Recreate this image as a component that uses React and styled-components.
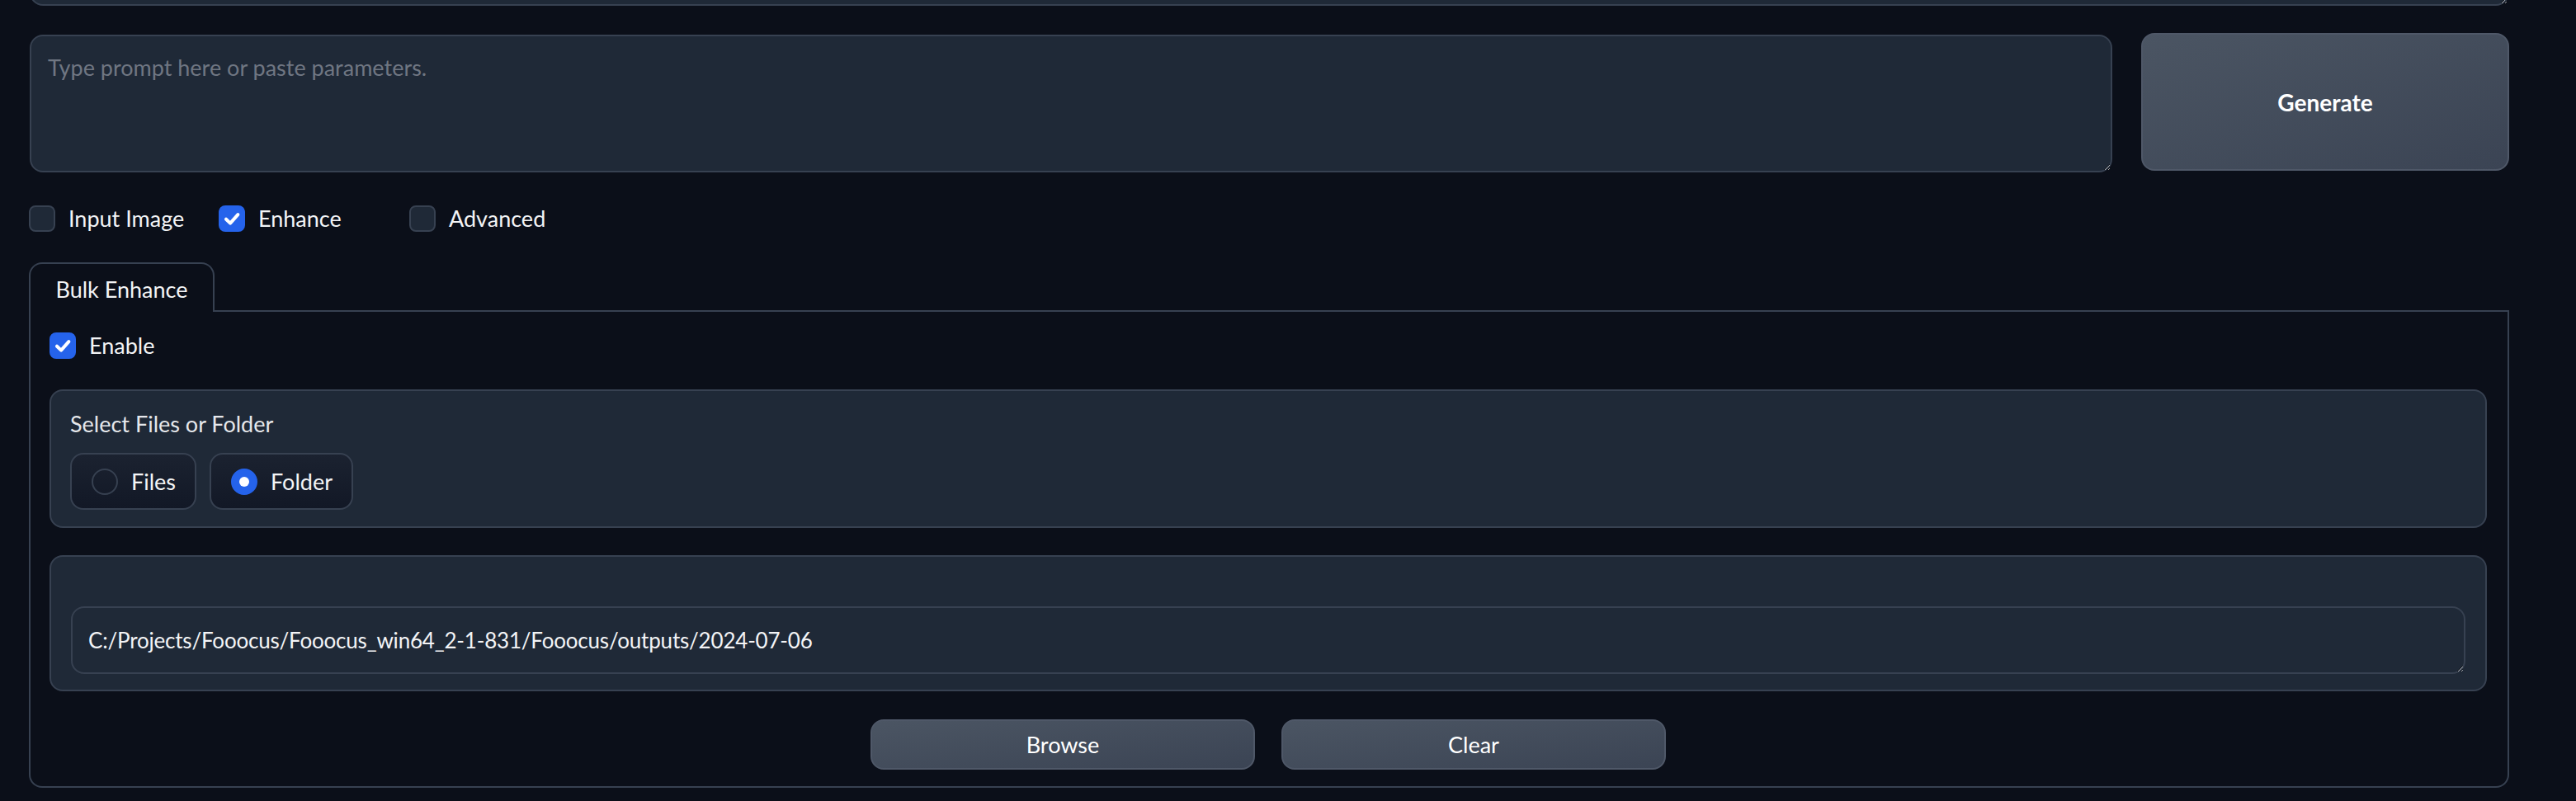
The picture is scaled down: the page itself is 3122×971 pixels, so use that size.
import React from 'react';
import styled, { createGlobalStyle } from 'styled-components';

const Global = createGlobalStyle`
  html, body { margin: 0; padding: 0; background: #0b0f19; }
  body {
    font-family: Lato, "Noto Sans", sans-serif;
    color: #f3f4f6;
    overflow: hidden;
  }
  * { box-sizing: border-box; }
`;

const FONT = 27;

const Page = styled.div`
  width: 3122px;
  height: 971px;
  padding: 0 81px 0 36px;
  display: flex;
  flex-direction: column;
  background: #0b0f19;
  overflow: hidden;
`;

const Area = styled.textarea`
  display: block;
  width: 100%;
  font-family: inherit;
  font-size: ${(p) => p.$size || FONT}px;
  letter-spacing: ${(p) => p.$ls || 0}px;
  line-height: 36px;
  color: #f3f4f6;
  background: #1f2937;
  border: 2px solid #374151;
  border-radius: 16px;
  padding: ${(p) => p.$pad || '20px'};
  color-scheme: dark;
  resize: vertical;
  outline: none;
  overflow: hidden;
  white-space: nowrap;
  &::placeholder { color: #6f7682; }
`;

const TopArea = styled(Area)`
  height: 100px;
  margin-top: -93px;
  flex: none;
`;

const PromptRow = styled.div`
  display: flex;
  gap: 35px;
  margin-top: 33px;
  height: 169px;
`;

const PromptArea = styled(Area)`
  flex: 1;
  height: 167px;
  margin-top: 2px;
`;

const SecondaryButton = styled.button`
  font-family: inherit;
  color: #ffffff;
  background: linear-gradient(to bottom right, #4b5563, #3b4454);
  border: 2px solid #4f5868;
  border-radius: 16px;
  cursor: pointer;
  display: flex;
  align-items: center;
  justify-content: center;
  font-size: ${(p) => (p.$big ? 28 : FONT)}px;
  font-weight: ${(p) => (p.$big ? 700 : 400)};
  width: ${(p) => p.$w}px;
  height: ${(p) => p.$h}px;
  flex: none;
  padding: 0;
`;

const CheckRow = styled.div`
  display: flex;
  margin-top: 40px;
  margin-left: -1px;
  height: 32px;
`;

const CheckItem = styled.label`
  display: flex;
  align-items: center;
  gap: 16px;
  height: 32px;
  flex: 0 0 ${(p) => p.$w || 'auto'};
  font-size: ${FONT}px;
  line-height: 32px;
  color: #f3f4f6;
`;

const Box = styled.span`
  width: 32px;
  height: 32px;
  flex: none;
  border-radius: 8px;
  border: 2px solid ${(p) => (p.$on ? '#2563eb' : '#374151')};
  background: ${(p) => (p.$on ? '#2563eb' : '#1f2937')};
  display: flex;
  align-items: center;
  justify-content: center;
  svg { width: 28px; height: 28px; }
`;

const Tabs = styled.div`
  display: flex;
  flex-direction: column;
  margin-top: 37px;
  margin-left: -1px;
`;

const TabNav = styled.div`
  display: flex;
  border-bottom: 2px solid #374151;
`;

const TabButton = styled.div`
  width: 225px;
  height: 60px;
  margin-bottom: -2px;
  border: 2px solid #374151;
  border-bottom: none;
  border-radius: 16px 16px 0 0;
  background: #0b0f19;
  display: flex;
  align-items: center;
  justify-content: center;
  font-size: ${FONT}px;
  color: #f3f4f6;
  padding-top: 2px;
`;

const TabPanel = styled.div`
  border: 2px solid #374151;
  border-top: none;
  border-radius: 0 0 16px 16px;
  padding: 25px 25px 19px 23px;
  display: flex;
  flex-direction: column;
  height: 577px;
`;

const Block = styled.div`
  background: #1f2937;
  border: 2px solid #374151;
  border-radius: 16px;
  padding: ${(p) => p.$pad};
  margin-top: ${(p) => p.$mt}px;
  display: flex;
  flex-direction: column;
`;

const BlockLabel = styled.div`
  font-size: ${FONT}px;
  line-height: 36px;
  height: 36px;
  color: #e5e7eb;
`;

const RadioRow = styled.div`
  display: flex;
  gap: 16px;
  margin-top: 17px;
`;

const RadioOption = styled.label`
  display: flex;
  align-items: center;
  gap: 16px;
  height: 69px;
  padding: 0 23px 0 24px;
  border: 2px solid #374151;
  border-radius: 16px;
  background: linear-gradient(to top, #121826, #1b2230);
  font-size: ${FONT}px;
  color: #f3f4f6;
`;

const RadioDot = styled.span`
  width: 32px;
  height: 32px;
  border-radius: 50%;
  flex: none;
  border: 2px solid ${(p) => (p.$on ? '#2563eb' : '#374151')};
  background: ${(p) => (p.$on ? '#2563eb' : 'transparent')};
  display: flex;
  align-items: center;
  justify-content: center;
  &::after {
    content: '';
    display: ${(p) => (p.$on ? 'block' : 'none')};
    width: 12px;
    height: 12px;
    border-radius: 50%;
    background: #ffffff;
  }
`;

const PathArea = styled(Area)`
  height: 82px;
  margin-top: 60px;
`;

const ButtonRow = styled.div`
  display: flex;
  justify-content: center;
  gap: 32px;
  margin-top: 34px;
`;

const Check = () => (
  <svg viewBox="0 0 16 16" fill="none">
    <path
      d="M4 8.4 L6.9 11.2 L12.2 5.2"
      stroke="#ffffff"
      strokeWidth="2.3"
      strokeLinecap="round"
      strokeLinejoin="round"
    />
  </svg>
);

const Checkbox = ({ on, label, w }) => (
  <CheckItem $w={w}>
    <Box $on={on}>{on && <Check />}</Box>
    <span>{label}</span>
  </CheckItem>
);

export default function App() {
  return (
    <>
      <Global />
      <Page>
        <TopArea readOnly defaultValue="" />
        <PromptRow>
          <PromptArea placeholder="Type prompt here or paste parameters." readOnly />
          <SecondaryButton $big $w={446} $h={167}>Generate</SecondaryButton>
        </PromptRow>
        <CheckRow>
          <Checkbox label="Input Image" w="230px" />
          <Checkbox on label="Enhance" w="231px" />
          <Checkbox label="Advanced" />
        </CheckRow>
        <Tabs>
          <TabNav>
            <TabButton>Bulk Enhance</TabButton>
          </TabNav>
          <TabPanel>
            <Checkbox on label="Enable" />
            <Block $pad="22px 24px 20px 23px" $mt={37}>
              <BlockLabel>Select Files or Folder</BlockLabel>
              <RadioRow>
                <RadioOption>
                  <RadioDot />
                  <span>Files</span>
                </RadioOption>
                <RadioOption>
                  <RadioDot $on />
                  <span>Folder</span>
                </RadioOption>
              </RadioRow>
            </Block>
            <Block $pad="0 24px 19px 24px" $mt={33}>
              <PathArea
                $pad="21px 19px"
                $size={26}
                $ls={-0.2}
                readOnly
                defaultValue="C:/Projects/Fooocus/Fooocus_win64_2-1-831/Fooocus/outputs/2024-07-06"
              />
            </Block>
            <ButtonRow>
              <SecondaryButton $w={466} $h={61}>Browse</SecondaryButton>
              <SecondaryButton $w={466} $h={61}>Clear</SecondaryButton>
            </ButtonRow>
          </TabPanel>
        </Tabs>
      </Page>
    </>
  );
}
